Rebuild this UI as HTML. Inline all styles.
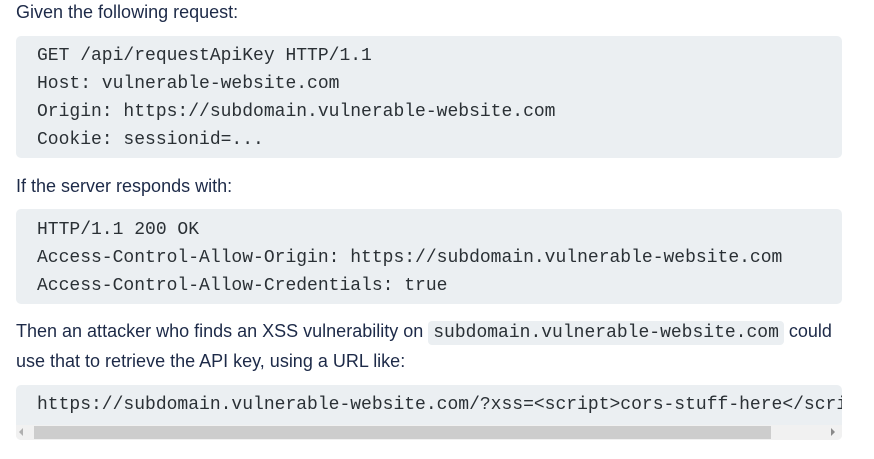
<!DOCTYPE html>
<html><head><style>
body{margin:0;background:#fff;width:874px;height:459px;overflow:hidden;font-family:"Liberation Sans",sans-serif;color:#1d2a48;font-size:18px;}
.p{position:absolute;left:16px;white-space:nowrap;}
.c{position:absolute;left:16px;width:826px;background:#ebeff2;border-radius:5px;font-family:"Liberation Mono",monospace;font-size:18px;color:#2a3035;}
.c div{position:absolute;left:21px;white-space:pre;}
.ic{background:#ebeff2;border-radius:4px;font-family:"Liberation Mono",monospace;font-size:18px;padding:2px 5px;color:#2a3035;}
</style></head><body>
<div class="p" style="top:2px">Given the following request:</div>
<div class="c" style="top:36px;height:122px">
<div style="top:10px">GET /api/requestApiKey HTTP/1.1</div>
<div style="top:38px">Host: vulnerable-website.com</div>
<div style="top:66px">Origin: https://subdomain.vulnerable-website.com</div>
<div style="top:94px">Cookie: sessionid=...</div>
</div>
<div class="p" style="top:176px">If the server responds with:</div>
<div class="c" style="top:209px;height:95px">
<div style="top:11px">HTTP/1.1 200 OK</div>
<div style="top:39px">Access-Control-Allow-Origin: https://subdomain.vulnerable-website.com</div>
<div style="top:67px">Access-Control-Allow-Credentials: true</div>
</div>
<div class="p" style="top:321px">Then an attacker who finds an XSS vulnerability on <span class="ic">subdomain.vulnerable-website.com</span> could</div>
<div class="p" style="top:351px">use that to retrieve the API key, using a URL like:</div>
<div class="c" style="top:385px;height:55px;overflow:hidden">
<div style="top:10px">https://subdomain.vulnerable-website.com/?xss=&lt;script&gt;cors-stuff-here&lt;/script&gt;</div>
<div style="left:0;top:40px;width:826px;height:15px;background:#f1f1f1"></div>
<div style="left:18px;top:41px;width:737px;height:13px;background:#cdcdcd"></div>
<div style="left:3px;top:43px;width:0;height:0;border:4px solid transparent;border-right:4px solid #b0b0b0;border-left:0"></div>
<div style="left:815px;top:43px;width:0;height:0;border:4px solid transparent;border-left:4px solid #8a8a8a;border-right:0"></div>
</div>
</body></html>
